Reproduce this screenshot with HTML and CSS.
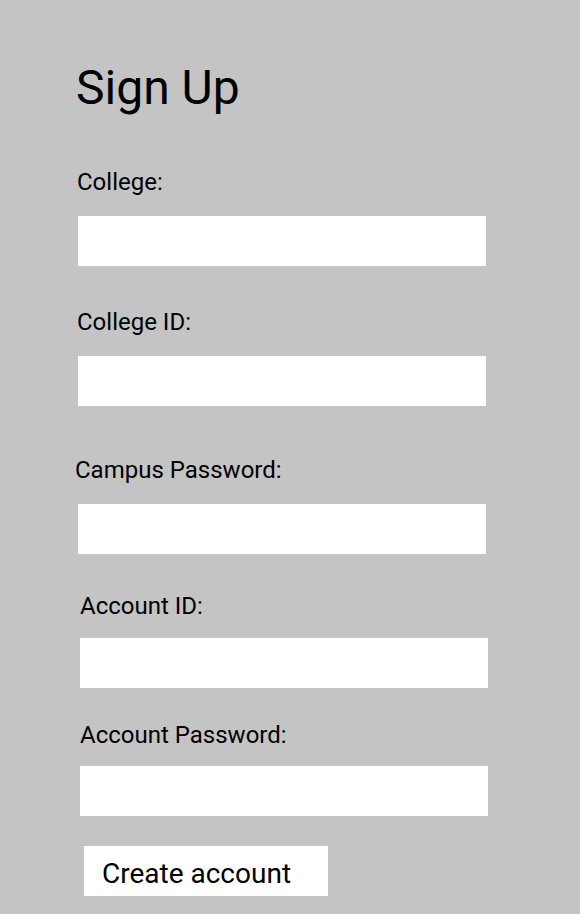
FILE: index.html
```html
<!DOCTYPE html>
<html lang="en">
<head>
<meta charset="utf-8">
<title>Sign Up</title>
<link rel="stylesheet" href="styles.css">
</head>
<body>
<main class="signup">
  <h1 class="title">Sign Up</h1>
  <form class="form">
    <label class="label label-college" for="college">College:</label>
    <input class="field field-a gap-20" id="college" type="text">

    <label class="label label-college-id" for="college-id">College ID:</label>
    <input class="field field-a gap-20" id="college-id" type="text">

    <label class="label label-campus" for="campus-pw">Campus Password:</label>
    <input class="field field-a gap-20" id="campus-pw" type="password">

    <label class="label label-account-id" for="account-id">Account ID:</label>
    <input class="field field-b gap-18" id="account-id" type="text">

    <label class="label label-account-pw" for="account-pw">Account Password:</label>
    <input class="field field-b gap-17" id="account-pw" type="password">

    <button class="submit" type="button">Create account</button>
  </form>
</main>
</body>
</html>
```

FILE: styles.css
```css
html, body {
  margin: 0;
  padding: 0;
  background: #c4c4c4;
}

body {
  font-family: Roboto, "Liberation Sans", sans-serif;
  color: #000;
  width: 580px;
  height: 914px;
  overflow: hidden;
}

.signup {
  display: flex;
  flex-direction: column;
  padding-top: 60px;
}

.title {
  margin: 0 0 0 76px;
  font-size: 48px;
  font-weight: 400;
  line-height: 56px;
}

.form {
  display: flex;
  flex-direction: column;
  align-items: flex-start;
  margin: 0;
}

.label {
  display: block;
  font-size: 24px;
  line-height: 28px;
  font-weight: 400;
}

.label-college { margin: 52px 0 0 77px; }
.label-college-id { margin: 42px 0 0 77px; }
.label-campus { margin: 50px 0 0 75px; }
.label-account-id { margin: 38px 0 0 80px; }
.label-account-pw { margin: 33px 0 0 80px; }

.field {
  box-sizing: border-box;
  width: 408px;
  height: 50px;
  border: none;
  outline: none;
  background: #fff;
  padding: 0 12px;
  font: 24px Roboto, "Liberation Sans", sans-serif;
  border-radius: 0;
}

.field-a { margin-left: 78px; }
.field-b { margin-left: 80px; }

.gap-17 { margin-top: 17px; }
.gap-18 { margin-top: 18px; }
.gap-20 { margin-top: 20px; }

.submit {
  box-sizing: border-box;
  margin: 30px 0 0 84px;
  width: 244px;
  height: 50px;
  padding: 11px 0 0 18px;
  border: none;
  background: #fff;
  color: #000;
  font-family: Roboto, "Liberation Sans", sans-serif;
  font-size: 28px;
  line-height: 33px;
  text-align: left;
  display: flex;
  align-items: flex-start;
  border-radius: 0;
}
```
